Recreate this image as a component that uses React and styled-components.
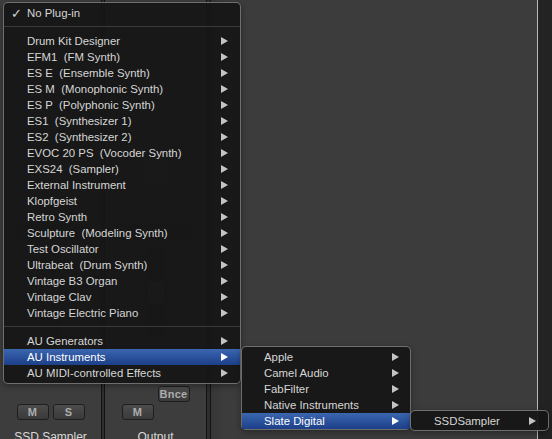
import React from 'react';
import styled, { createGlobalStyle } from 'styled-components';

const Global = createGlobalStyle`
  html, body { margin: 0; padding: 0; background: #3c3c3c; }
  body { width: 552px; height: 439px; overflow: hidden; font-family: "Liberation Sans", Arial, sans-serif; }
`;

const Screen = styled.div`
  position: relative;
  width: 552px;
  height: 439px;
  display: flex;
  overflow: hidden;
  background: #3c3c3c;
`;

const Strip = styled.div`
  width: ${p => p.$w}px;
  flex: none;
  display: flex;
  flex-direction: column;
  align-items: center;
  background: #3d3d3d;
  padding-top: 134px;
  box-sizing: border-box;
`;

const Divider = styled.div`
  width: ${p => p.$w}px;
  flex: none;
  box-sizing: border-box;
  border-left: 1px solid #121212;
  border-right: 1px solid #121212;
  background: #2e2e2e;
`;

const Area = styled.div`
  flex: 1;
  background: linear-gradient(90deg, #363636 0px, #3c3c3c 14px);
`;

const EdgeLine = styled.div`
  width: 1px;
  flex: none;
  background: #b8b8b8;
`;

const SidePanel = styled.div`
  width: 14px;
  flex: none;
  background: #232323;
`;

const ModeBox = styled.div`
  width: 30px;
  height: 10px;
  border-radius: 2px;
  background: #484848;
`;

const Knob = styled.div`
  margin-top: 12px;
  width: 28px;
  height: 28px;
  border-radius: 50%;
  background: #4c4c4c;
`;

const ValueBox = styled.div`
  margin-top: 40px;
  width: 70px;
  height: 16px;
  display: grid;
  grid-template-columns: 1fr 1fr;
  gap: 2px;
  & > span { background: #303030; border-radius: 2px; }
`;

const Fader = styled.div`
  margin-top: 8px;
  width: 20px;
  height: 90px;
  background: #363636;
  display: flex;
  align-items: center;
  justify-content: center;
  & > span { width: 16px; height: 22px; background: #4a4a4a; border-radius: 2px; }
`;

const Spacer = styled.div`
  flex: 1;
`;

const ButtonGrid = styled.div`
  display: grid;
  grid-template-columns: 32px 32px;
  column-gap: 4px;
  row-gap: 2px;
`;

const SmallButton = styled.div`
  grid-column: ${p => p.$col};
  height: 16px;
  box-sizing: border-box;
  border: 1px solid #1e1e1e;
  border-radius: 3px;
  background: linear-gradient(#4c4c4c, #3a3a3a);
  color: #adadad;
  font-size: 11px;
  font-weight: bold;
  display: flex;
  align-items: center;
  justify-content: center;
  letter-spacing: 0.3px;
`;

const StripName = styled.div`
  margin-top: 10px;
  height: 16px;
  margin-bottom: -7px;
  font-size: 12px;
  color: #d8d8d8;
  white-space: nowrap;
`;

const Menu = styled.div`
  position: absolute;
  left: ${p => p.$x}px;
  top: ${p => p.$y}px;
  width: ${p => p.$w}px;
  box-sizing: border-box;
  padding: 2px 0 ${p => p.$pb}px;
  border: 1px solid rgba(140, 140, 140, 0.75);
  border-radius: 5px;
  background: rgba(22, 22, 22, 0.95);
  box-shadow: 0 2px 6px rgba(0, 0, 0, 0.35);
`;

const Row = styled.div`
  height: 16px;
  display: grid;
  grid-template-columns: ${p => p.$pl}px 1fr auto;
  align-items: center;
  padding-right: ${p => p.$pr}px;
  font-size: 11.4px;
  white-space: pre;
  color: ${p => (p.$active ? '#ffffff' : '#d6d6d6')};
  background: ${p => (p.$active ? 'linear-gradient(#3b66b0, #1c3f88)' : 'transparent')};
`;

const Check = styled.span`
  padding-left: 7px;
  font-size: 13px;
  font-family: "DejaVu Sans", sans-serif;
`;

const Label = styled.span``;

const Arrow = styled.span`
  width: 0;
  height: 0;
  border-top: 4px solid transparent;
  border-bottom: 4px solid transparent;
  border-left: 7px solid ${p => (p.$active ? '#ffffff' : '#c4c4c4')};
`;

const Sep = styled.div`
  height: 1px;
  margin: 5px 0 6px;
  background: #3a3a3a;
`;

const MenuItem = ({ label, active, check, arrow = true, pl, pr }) => (
  <Row $active={active} $pl={pl} $pr={pr}>
    <Check>{check ? '✓' : ''}</Check>
    <Label>{label}</Label>
    {arrow ? <Arrow $active={active} /> : <span />}
  </Row>
);

const instruments = [
  'Drum Kit Designer',
  'EFM1  (FM Synth)',
  'ES E  (Ensemble Synth)',
  'ES M  (Monophonic Synth)',
  'ES P  (Polyphonic Synth)',
  'ES1  (Synthesizer 1)',
  'ES2  (Synthesizer 2)',
  'EVOC 20 PS  (Vocoder Synth)',
  'EXS24  (Sampler)',
  'External Instrument',
  'Klopfgeist',
  'Retro Synth',
  'Sculpture  (Modeling Synth)',
  'Test Oscillator',
  'Ultrabeat  (Drum Synth)',
  'Vintage B3 Organ',
  'Vintage Clav',
  'Vintage Electric Piano',
];

const au = ['AU Generators', 'AU Instruments', 'AU MIDI-controlled Effects'];
const vendors = ['Apple', 'Camel Audio', 'FabFilter', 'Native Instruments', 'Slate Digital'];

const ChannelStrip = ({ w, name, buttons }) => (
  <Strip $w={w}>
    <ModeBox />
    <Knob />
    <ValueBox><span /><span /></ValueBox>
    <Fader><span /></Fader>
    <Spacer />
    <ButtonGrid>
      {buttons.map(b => (
        <SmallButton key={b.t} $col={b.col}>{b.t}</SmallButton>
      ))}
    </ButtonGrid>
    <StripName>{name}</StripName>
  </Strip>
);

export default function App() {
  return (
    <>
      <Global />
      <Screen>
        <ChannelStrip
          w={101}
          name="SSD Sampler"
          buttons={[{ t: 'M', col: 1 }, { t: 'S', col: 2 }]}
        />
        <Divider $w={4} />
        <ChannelStrip
          w={101}
          name="Output"
          buttons={[{ t: 'Bnce', col: 2 }, { t: 'M', col: 1 }]}
        />
        <Divider $w={5} />
        <Area />
        <EdgeLine />
        <SidePanel />

        <Menu $x={3} $y={2} $w={238} $pb={2}>
          <MenuItem label="No Plug-in" check arrow={false} pl={23} pr={12} />
          <Sep />
          {instruments.map(l => (
            <MenuItem key={l} label={l} pl={23} pr={12} />
          ))}
          <Sep />
          {au.map(l => (
            <MenuItem key={l} label={l} active={l === 'AU Instruments'} pl={23} pr={12} />
          ))}
        </Menu>

        <Menu $x={241} $y={346} $w={170} $pb={0}>
          {vendors.map(l => (
            <MenuItem key={l} label={l} active={l === 'Slate Digital'} pl={22} pr={11} />
          ))}
        </Menu>

        <Menu $x={410} $y={410} $w={139} $pb={1}>
          <MenuItem label="SSDSampler" pl={23} pr={12} />
        </Menu>
      </Screen>
    </>
  );
}
